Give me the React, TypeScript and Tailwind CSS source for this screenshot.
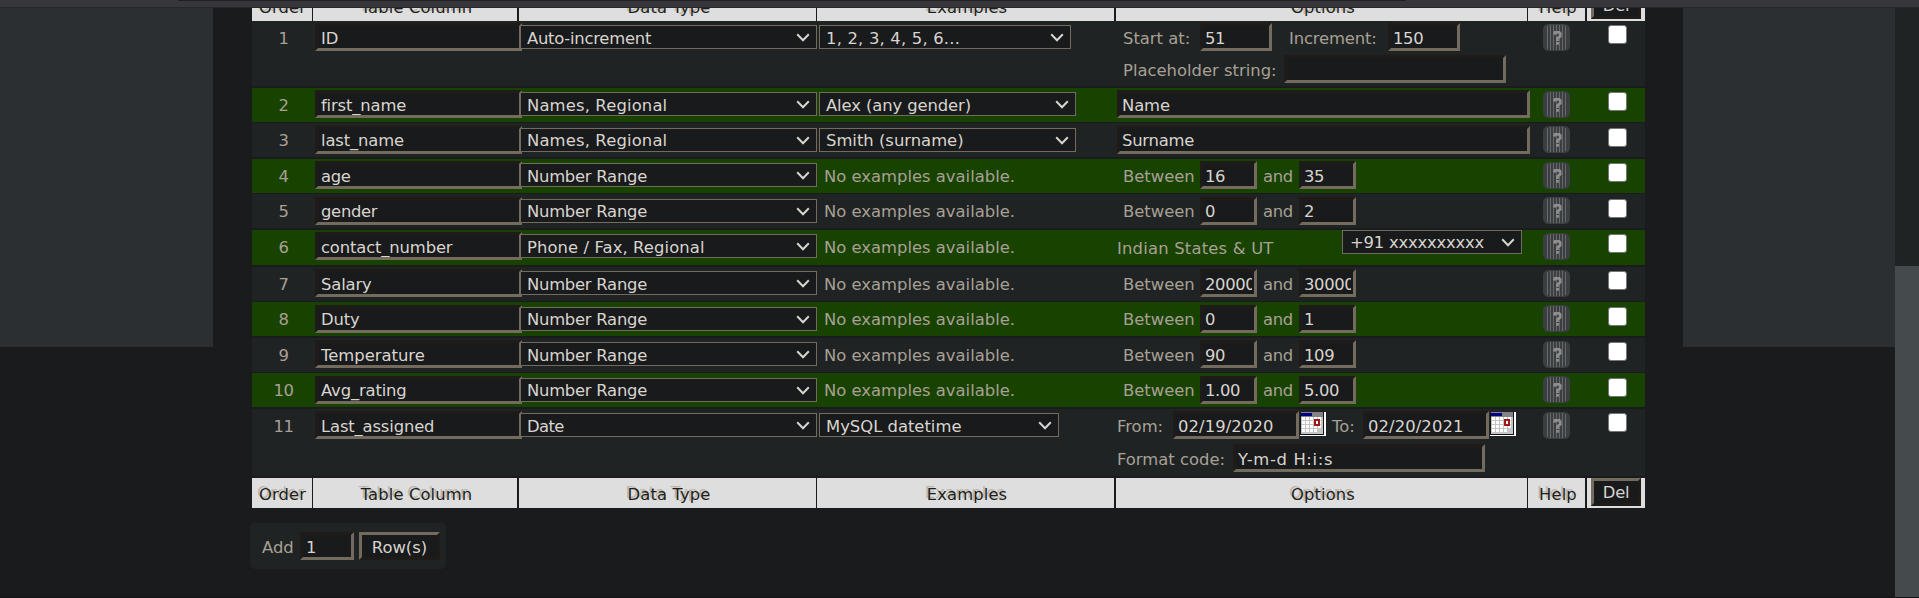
import React from "react";

type Row = {
  n: number;
  name: string;
  nameT?: string;
  type: string;
  typeT: string;
  example?: { label: string; w: string; t: string };
  h: string;
  pad: string;
  gap: string;
  options: React.ReactNode;
};

function Field({
  value = "",
  w,
  pl = "pl-[2px]",
  t = "tracking-[-0.35px]",
}: {
  value?: string;
  w: string;
  pl?: string;
  t?: string;
}) {
  return (
    <div
      className={`${w} ${pl} ${t} h-[28px] shrink-0 border-[3px] border-t-[#1e1b18] border-l-[#1e1b18] border-r-[#736b5e] border-b-[#736b5e] bg-[#181a1b] pr-[2px] leading-[calc(24px+var(--drop,0px))] text-[#d8d4cf]`}
    >
      <div className="h-[22px] overflow-hidden whitespace-nowrap">{value}</div>
    </div>
  );
}

function Select({ value, w, pl = "pl-[6px]", t }: { value: string; w: string; pl?: string; t: string }) {
  return (
    <div
      className={`${w} ${pl} flex h-[24px] shrink-0 items-start justify-between border border-[#736b5e] bg-[#181a1b] pr-[6px] leading-[calc(24px+var(--drop,0px))] text-[#d8d4cf]`}
    >
      <span className={`${t} whitespace-nowrap`}>{value}</span>
      <svg width="14" height="9" viewBox="0 0 14 9" className="mt-[7px] shrink-0">
        <path d="M1.2 1.3 L7 7.2 L12.8 1.3" fill="none" stroke="#d8d4cf" strokeWidth="2" />
      </svg>
    </div>
  );
}

function Label({ children, w, t = "tracking-[0px]" }: { children: React.ReactNode; w: string; t?: string }) {
  return (
    <span className={`${w} ${t} block h-[30px] shrink-0 whitespace-nowrap leading-[calc(30px+var(--drop,0px))] text-[#a8a095]`}>
      {children}
    </span>
  );
}

function Calendar() {
  return (
    <svg width="26" height="25" viewBox="0 0 26 25" className="mt-px shrink-0" shapeRendering="crispEdges">
      <rect width="26" height="24" fill="#fff" />
      <rect width="24" height="22" fill="#c4c4c4" />
      <rect width="24" height="5" fill="#848284" />
      <rect x="1" y="1" width="11" height="3" fill="#000084" />
      <path
        d="M2 5h3v3h-3zM6 5h3v3h-3zM10 5h3v3h-3zM14 5h3v3h-3zM18 5h3v3h-3zM2 9h3v3h-3zM6 9h3v3h-3zM10 9h3v3h-3zM18 9h3v3h-3zM2 13h3v3h-3zM6 13h3v3h-3zM10 13h3v3h-3zM14 13h3v3h-3zM18 13h3v3h-3zM2 17h3v3h-3zM6 17h3v3h-3zM10 17h3v3h-3zM14 17h3v3h-3z"
        fill="#fff"
      />
      <path d="M14 7h6v7h-6z" fill="#a01818" />
      <path d="M16 9h2v3h-2z" fill="#fff" />
      <path d="M23.5 0V22.5H0M0.5 0V22" fill="none" stroke="#151515" />
    </svg>
  );
}

function HelpIcon() {
  return (
    <svg width="27" height="27" viewBox="0 0 27 27">
      <rect width="27" height="27" rx="5.5" fill="#3b3f41" />
      <path d="M4.5 2v23M7.5 1v25M10.5 1v25M13.5 1v25M16.5 1v25M19.5 1v25M22.5 2v23" stroke="#66686a" strokeWidth="1" />
      <path d="M11.2 10.4L12 8.4h4.2l1 1.2v2.8l-2.7 2v2.6M13.1 19.4h2.8" fill="none" stroke="#8f8e8d" strokeWidth="2.8" />
    </svg>
  );
}

function Between({ a, b }: { a: string; b: string }) {
  return (
    <div className="flex pl-[6px]">
      <Label w="w-[77px]">Between</Label>
      <Field w="w-[57px]" value={a} />
      <span className="w-[6px]" />
      <Label w="w-[36px]" t="tracking-[-0.4px]">and</Label>
      <Field w="w-[57px]" value={b} />
    </div>
  );
}

const rows: Row[] = [
  {
    n: 1, name: "ID", type: "Auto-increment", typeT: "tracking-[-0.25px]",
    example: { label: "1, 2, 3, 4, 5, 6...", w: "w-[252px]", t: "tracking-[0.2px]" },
    h: "h-[65px]", pad: "pt-[2px]", gap: "mb-[2px]",
    options: (
      <div className="flex flex-col gap-[2px] pl-[6px]">
        <div className="flex">
          <Label w="w-[77px]">Start at:</Label>
          <Field w="w-[72px]" value="51" />
          <span className="w-[17px]" />
          <Label w="w-[99px]" t="tracking-[-0.15px]">Increment:</Label>
          <Field w="w-[72px]" value="150" />
        </div>
        <div className="flex">
          <Label w="w-[161px]">Placeholder string:</Label>
          <Field w="w-[222px]" />
        </div>
      </div>
    ),
  },
  {
    n: 2, name: "first_name", type: "Names, Regional", typeT: "tracking-[0.15px]",
    example: { label: "Alex (any gender)", w: "w-[257px]", t: "tracking-[-0.1px]" },
    h: "h-[34px]", pad: "pt-[2px]", gap: "mb-px",
    options: <Field w="w-[413px]" value="Name" t="tracking-[-0.1px]" />,
  },
  {
    n: 3, name: "last_name", type: "Names, Regional", typeT: "tracking-[0.15px]",
    example: { label: "Smith (surname)", w: "w-[257px]", t: "tracking-[0px]" },
    h: "h-[34px]", pad: "pt-[3px]", gap: "mb-[2px]",
    options: <Field w="w-[413px]" value="Surname" t="tracking-[-0.25px]" />,
  },
  { n: 4, name: "age", nameT: "tracking-[-0.35px]", type: "Number Range", typeT: "tracking-[-0.25px]", h: "h-[34px]", pad: "pt-[2px]", gap: "mb-px", options: <Between a="16" b="35" /> },
  { n: 5, name: "gender", nameT: "tracking-[-0.3px]", type: "Number Range", typeT: "tracking-[-0.25px]", h: "h-[34px]", pad: "pt-[3px]", gap: "mb-[2px]", options: <Between a="0" b="2" /> },
  {
    n: 6, name: "contact_number", type: "Phone / Fax, Regional", typeT: "tracking-[0.1px]",
    h: "h-[35px]", pad: "pt-[2px]", gap: "mb-[2px]",
    options: (
      <div className="-mt-[2px] flex">
        <div className="w-[225px] pt-[3px]">
          <Label w="w-[200px]" t="tracking-[0.2px]">Indian States &amp; UT</Label>
        </div>
        <div className="[--drop:0px]">
          <Select w="w-[180px]" pl="pl-[7px]" value="+91 xxxxxxxxxx" t="tracking-[-0.2px]" />
        </div>
      </div>
    ),
  },
  { n: 7, name: "Salary", type: "Number Range", typeT: "tracking-[-0.25px]", h: "h-[34px]", pad: "pt-[2px]", gap: "mb-px", options: <Between a="200000" b="300000" /> },
  { n: 8, name: "Duty", type: "Number Range", typeT: "tracking-[-0.25px]", h: "h-[34px]", pad: "pt-[3px]", gap: "mb-[2px]", options: <Between a="0" b="1" /> },
  { n: 9, name: "Temperature", nameT: "tracking-[0px]", type: "Number Range", typeT: "tracking-[-0.25px]", h: "h-[34px]", pad: "pt-[2px]", gap: "mb-px", options: <Between a="90" b="109" /> },
  { n: 10, name: "Avg_rating", type: "Number Range", typeT: "tracking-[-0.25px]", h: "h-[34px]", pad: "pt-[3px]", gap: "mb-[2px]", options: <Between a="1.00" b="5.00" /> },
  {
    n: 11, name: "Last_assigned", type: "Date", typeT: "tracking-[-0.6px]",
    example: { label: "MySQL datetime", w: "w-[240px]", t: "tracking-[0px]" },
    h: "h-[67px]", pad: "pt-[2px]", gap: "mb-[2px]",
    options: (
      <div className="flex flex-col gap-[3px]">
        <div className="flex">
          <Label w="w-[56px]">From:</Label>
          <Field w="w-[126px]" value="02/19/2020" t="tracking-[0.1px]" />
          <span className="w-px" />
          <Calendar />
          <span className="w-[6px]" />
          <Label w="w-[31px]">To:</Label>
          <Field w="w-[126px]" value="02/20/2021" t="tracking-[0.1px]" />
          <span className="w-px" />
          <Calendar />
        </div>
        <div className="flex">
          <Label w="w-[116px]">Format code:</Label>
          <Field w="w-[252px]" value="Y-m-d H:i:s" t="tracking-[0.65px]" />
        </div>
      </div>
    ),
  },
];

const headCell = "flex h-[30px] shrink-0 justify-center bg-[#dedede] leading-[33px]";

function HeaderRow() {
  return (
    <div className="flex tracking-[0.1px] text-[#1c1e20] [text-shadow:-2px_-2px_0.5px_#bdb5aa]">
      <div className={`${headCell} mr-px w-[60px] pl-px`}>Order</div>
      <div className={`${headCell} mr-[2px] w-[204px] pl-[3px]`}>Table Column</div>
      <div className={`${headCell} mr-px w-[297px] pl-[3px]`}>Data Type</div>
      <div className={`${headCell} mr-[2px] w-[297px] pl-[3px]`}>Examples</div>
      <div className={`${headCell} mr-px w-[411px] pl-[3px]`}>Options</div>
      <div className={`${headCell} mr-[2px] w-[57px] pl-[3px]`}>Help</div>
      <div className={`${headCell} w-[58px]`}>
        <div className="h-[28px] w-[50px] border-[3px] border-t-[#736b5e] border-l-[#736b5e] border-r-[#1e1b18] border-b-[#1e1b18] bg-[#181a1b] text-center leading-[24px] tracking-[-0.3px] text-[#d8d4cf] [text-shadow:none]">
          Del
        </div>
      </div>
    </div>
  );
}

function DataRow({ r }: { r: Row }) {
  const low = r.pad === "pt-[2px]";
  return (
    <div
      className={`${r.h} ${r.pad} ${r.gap} ${low ? "[--drop:2px]" : "[--drop:0px]"} ${
        r.n % 2 === 0 ? "bg-[#184200]" : "bg-[#1f2324]"
      } flex items-start`}
    >
      <span className="w-[63px] shrink-0 text-center leading-[calc(30px+var(--drop,0px))] tracking-[-0.4px] text-[#a8a095]">{r.n}</span>
      <Field w="w-[207px]" pl="pl-[3px]" value={r.name} t={r.nameT ?? "tracking-[-0.15px]"} />
      <div className="-ml-[2px] pt-[2px]">
        <Select w="w-[297px]" value={r.type} t={r.typeT} />
      </div>
      <div className="w-[300px] shrink-0 pl-[2px]">
        {r.example ? (
          <div className="pt-[2px]">
            <Select w={r.example.w} value={r.example.label} t={r.example.t} />
          </div>
        ) : (
          <div className="pl-[5px]">
            <Label w="w-[200px]">No examples available.</Label>
          </div>
        )}
      </div>
      <div className="w-[426px] shrink-0">{r.options}</div>
      <div className={`w-[65px] shrink-0 ${low ? "pt-px" : ""}`}>
        <HelpIcon />
      </div>
      <div className="mt-[2px] h-[19px] w-[19px] rounded-[3px] border border-[#767676] bg-white" />
    </div>
  );
}

export default function App() {
  return (
    <div className="flex h-[598px] w-[1919px] flex-col overflow-hidden border-b border-[#131415] bg-[#1a1b1c] text-[16.4px] [font-family:'DejaVu_Sans',sans-serif]">
      <div className="z-10 h-[8px] shrink-0 border-b border-[#26272a] bg-[#37373b]">
        <div className="ml-[178px] h-px w-[1228px] bg-[#202124]" />
      </div>
      <div className="flex min-h-0 flex-1">
        <div className="h-[339px] w-[213px] shrink-0 bg-[#2b2f31]" />
        <div className="min-w-0 flex-1 overflow-hidden">
          <div className="-mt-[17px] pl-[39px]">
            <HeaderRow />
            <div className="w-[1393px]">
              {rows.map((r) => (
                <DataRow key={r.n} r={r} />
              ))}
            </div>
            <HeaderRow />
          </div>
          <div className="ml-[37px] mt-[15px] flex h-[46px] w-[196px] rounded-[5px] bg-[#1f2324] pl-[12px] pt-[9px] [--drop:2px]">
            <Label w="w-[38px]">Add</Label>
            <Field w="w-[54px]" pl="pl-[3px]" value="1" />
            <div className="ml-[5px] h-[28px] w-[81px] border-[3px] border-t-[#736b5e] border-l-[#736b5e] border-r-[#1e1b18] border-b-[#1e1b18] bg-[#181a1b] text-center leading-[26px] text-[#d8d4cf]">
              Row(s)
            </div>
          </div>
        </div>
        <div className="h-[339px] w-[212px] shrink-0 bg-[#2b2f31]" />
        <div className="w-[24px] shrink-0 bg-[#202324] pt-[258px]">
          <div className="h-full bg-[#454a4d]" />
        </div>
      </div>
    </div>
  );
}
